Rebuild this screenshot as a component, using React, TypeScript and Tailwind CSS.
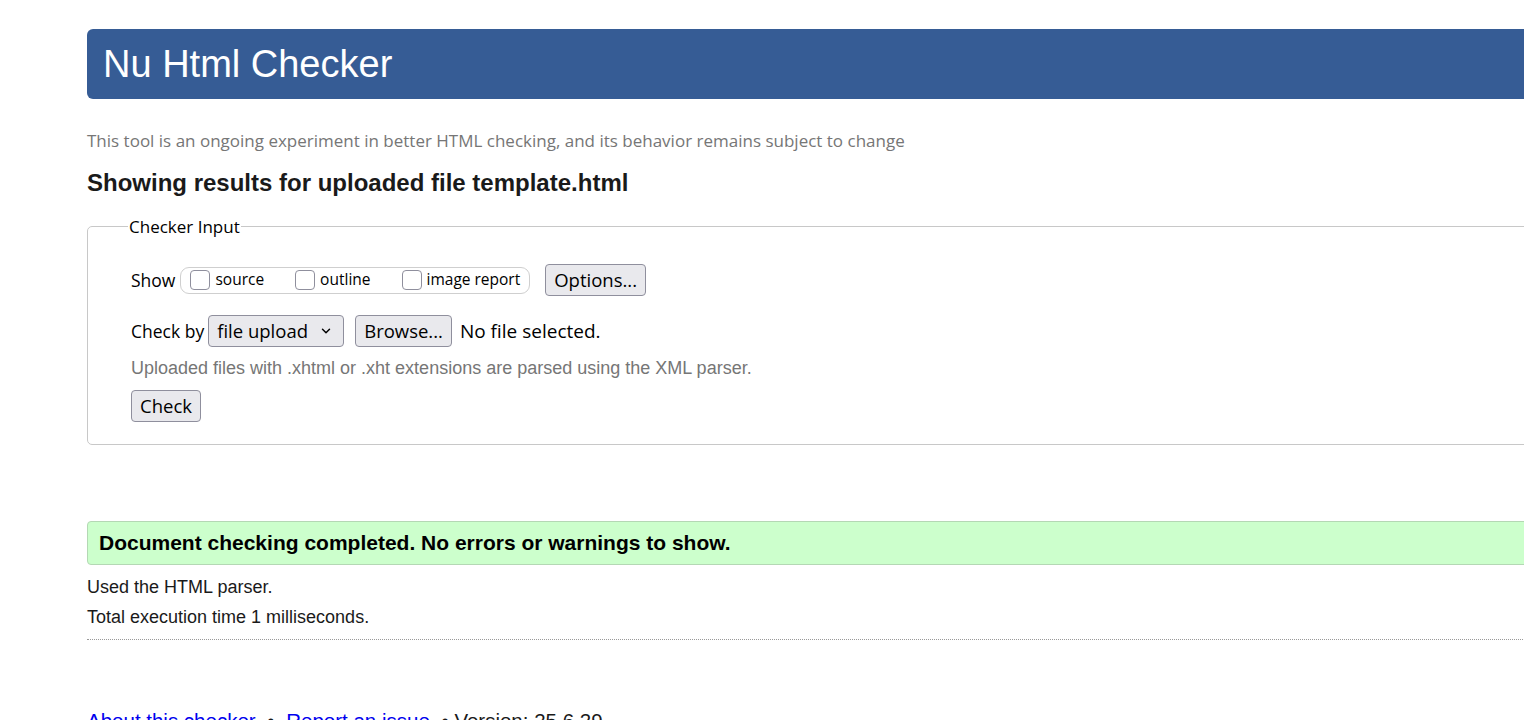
import { ChevronDown } from 'lucide-react';

const ui = "font-['Open_Sans',sans-serif]";
const arial = "font-['Liberation_Sans',Arial,sans-serif]";

const Box = ({ label }: { label: string }) => (
  <label className="flex items-center whitespace-nowrap">
    <span className="w-[20px] h-[20px] rounded-[4px] border border-[#8f8f9d] bg-white shrink-0" />
    <span className="ml-[5px] text-[15.5px]">{label}</span>
  </label>
);

const Btn = ({ children, className = '' }: { children: React.ReactNode; className?: string }) => (
  <button
    className={`h-[32px] px-[8px] rounded-[4px] border border-[#8f8f9d] bg-[#e9e9ed] text-[18.5px] text-black leading-none flex items-center whitespace-nowrap ${ui} ${className}`}
  >
    {children}
  </button>
);

export default function App() {
  return (
    <div className="w-[1524px] h-[720px] overflow-hidden bg-white">
      <div className="ml-[87px] w-[1600px] pt-[29px]">
        {/* Header */}
        <div className={`h-[70px] bg-[#365c95] rounded-l-[6px] flex items-center pl-[16px] ${arial}`}>
          <h1 className="text-white text-[38px] leading-none">Nu Html Checker</h1>
        </div>

        <p className={`mt-[29px] text-[#767676] text-[17px] ${ui}`}>
          This tool is an ongoing experiment in better HTML checking, and its behavior remains subject to change
        </p>

        <h2 className={`mt-[11px] text-[24px] font-bold text-[#1a1a1a] ${arial}`}>
          Showing results for uploaded file template.html
        </h2>

        {/* Checker input */}
        <fieldset className={`mt-[13px] border border-[#c8c8c8] rounded-[5px] pl-[43px] pr-[20px] pb-[22px] ${ui} text-[17px] text-black`}>
          <legend className="ml-[-3px] px-[1px]">Checker Input</legend>

          <div className="mt-[25px] flex items-center">
            <span className="text-[17.5px]">Show</span>
            <div className="ml-[5px] h-[27px] border border-[#cfcfcf] rounded-[9px] flex items-center pl-[9px] pr-[9px] gap-[31px]">
              <Box label="source" />
              <Box label="outline" />
              <Box label="image report" />
            </div>
            <Btn className="ml-[15px]">Options...</Btn>
          </div>

          <div className="mt-[19px] flex items-center">
            <span className="text-[17.5px]">Check by</span>
            <Btn className="ml-[4px] w-[136px] justify-between">
              <span>file upload</span>
              <ChevronDown className="w-[14px] h-[14px] mr-[2px]" strokeWidth={2.5} />
            </Btn>
            <Btn className="ml-[11px]">Browse...</Btn>
            <span className="ml-[8px] text-[19px]">No file selected.</span>
          </div>

          <p className={`mt-[8px] text-[#767676] text-[18px] ${arial}`}>
            Uploaded files with .xhtml or .xht extensions are parsed using the XML parser.
          </p>

          <Btn className="mt-[8px]">Check</Btn>
        </fieldset>

        {/* Result */}
        <div className={`mt-[76px] h-[44px] bg-[#ccffcc] border border-[#b4d8b4] rounded-l-[4px] flex items-center pl-[11px] ${arial}`}>
          <span className="text-[21px] font-bold text-black">Document checking completed. No errors or warnings to show.</span>
        </div>

        <p className={`mt-[9px] text-[18px] text-[#1a1a1a] ${arial}`}>Used the HTML parser.</p>
        <p className={`mt-[3px] text-[18px] text-[#1a1a1a] ${arial}`}>Total execution time 1 milliseconds.</p>
        <div className="mt-[8px] border-t border-dotted border-[#999]" />

        <p className={`mt-[66px] text-[20.5px] text-[#1a1a1a] ${arial}`}>
          <a className="text-[#0000ee] underline">About this checker</a>
          <span className="px-[6px]"> • </span>
          <a className="text-[#0000ee] underline">Report an issue</a>
          <span className="pl-[6px]"> • Version: 25.6.29</span>
        </p>
      </div>
    </div>
  );
}
